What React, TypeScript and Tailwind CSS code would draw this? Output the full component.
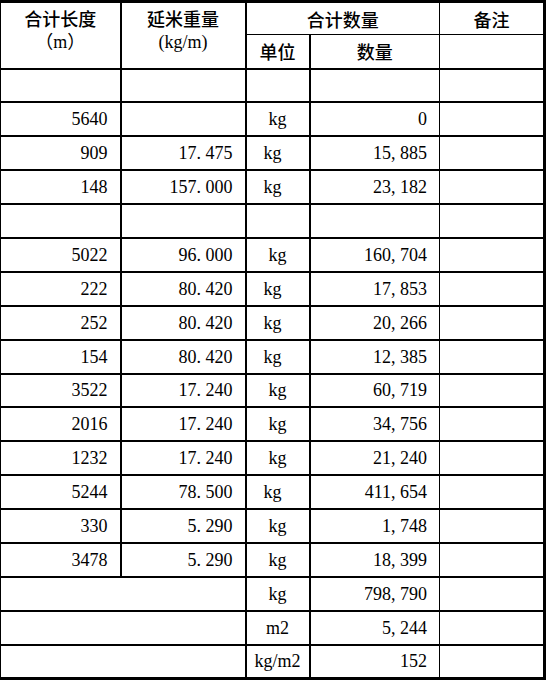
import React from "react";

type Row = { len?: string; wt?: string; unit?: string; qty?: string; left?: boolean; merged?: boolean };

const rows: Row[] = [
  {},
  { len: "5640", unit: "kg", qty: "0" },
  { len: "909", wt: "17.475", unit: "kg", qty: "15,885", left: true },
  { len: "148", wt: "157.000", unit: "kg", qty: "23,182", left: true },
  {},
  { len: "5022", wt: "96.000", unit: "kg", qty: "160,704" },
  { len: "222", wt: "80.420", unit: "kg", qty: "17,853", left: true },
  { len: "252", wt: "80.420", unit: "kg", qty: "20,266", left: true },
  { len: "154", wt: "80.420", unit: "kg", qty: "12,385", left: true },
  { len: "3522", wt: "17.240", unit: "kg", qty: "60,719" },
  { len: "2016", wt: "17.240", unit: "kg", qty: "34,756" },
  { len: "1232", wt: "17.240", unit: "kg", qty: "21,240" },
  { len: "5244", wt: "78.500", unit: "kg", qty: "411,654", left: true },
  { len: "330", wt: "5.290", unit: "kg", qty: "1,748" },
  { len: "3478", wt: "5.290", unit: "kg", qty: "18,399" },
  { merged: true, unit: "kg", qty: "798,790" },
  { merged: true, unit: "m2", qty: "5,244" },
  { merged: true, unit: "kg/m2", qty: "152" },
];

// SimSun-style half-width punctuation: give the dot and comma a full digit cell
function Num({ v }: { v?: string }) {
  if (!v) return null;
  const parts = v.split(/([.,])/);
  return (
    <>
      {parts.map((p, i) =>
        p === "." || p === "," ? (
          <span key={i} className="inline-block w-[9px] text-left">
            {p}
          </span>
        ) : (
          <React.Fragment key={i}>{p}</React.Fragment>
        )
      )}
    </>
  );
}

const serif = "font-['Liberation_Serif','Noto_Sans_CJK_SC',serif]";
const cjk = "font-['Noto_Sans_CJK_SC',sans-serif]";

export default function App() {
  return (
    <div className="w-[546px] h-[682px] bg-white overflow-hidden">
      <table
        className={`w-[546px] table-fixed border-collapse text-black text-[18px] ${serif} border-t-[3px] border-b-[3px] border-r-[3px] border-l border-black`}
      >
        <colgroup>
          <col className="w-[120px]" />
          <col className="w-[125px]" />
          <col className="w-[64px]" />
          <col className="w-[130px]" />
          <col />
        </colgroup>
        <thead>
          <tr className="h-[33px]">
            <th
              rowSpan={2}
              className="border-r-2 border-b-2 border-black align-top pt-[3px] font-normal leading-[24px]"
            >
              <div className={`${cjk} font-medium`}>合计长度</div>
              <div className="font-normal">（m）</div>
            </th>
            <th
              rowSpan={2}
              className="border-r-2 border-b-2 border-black align-top pt-[3px] font-normal leading-[24px]"
            >
              <div className={`${cjk} font-medium`}>延米重量</div>
              <div>(kg/m)</div>
            </th>
            <th colSpan={2} className={`border-r border-b border-black ${cjk} font-medium leading-[24px]`}>
              合计数量
            </th>
            <th className={`border-b border-black ${cjk} font-medium leading-[24px]`}>备注</th>
          </tr>
          <tr className="h-[34px]">
            <th className={`border-r-2 border-b-2 border-black ${cjk} font-medium`}>单位</th>
            <th className={`border-r border-b-2 border-black ${cjk} font-medium`}>数量</th>
            <th className="border-b-2 border-black" />
          </tr>
        </thead>
        <tbody>
          {rows.map((r, i) => (
            <tr key={i} className="h-[33.9px] leading-none">
              {r.merged ? (
                <td colSpan={2} className="border-r-2 border-b-2 border-black" />
              ) : (
                <>
                  <td className="border-r-2 border-b-2 border-black text-right pr-[12px]">{r.len}</td>
                  <td className="border-r-2 border-b-2 border-black text-right pr-[12px]">
                    <Num v={r.wt} />
                  </td>
                </>
              )}
              <td
                className={`border-r-2 border-b-2 border-black ${r.left ? "text-left pl-[17px]" : "text-center"}`}
              >
                {r.unit}
              </td>
              <td className="border-r border-b-2 border-black text-right pr-[12px]">
                <Num v={r.qty} />
              </td>
              <td className="border-b-2 border-black" />
            </tr>
          ))}
        </tbody>
      </table>
    </div>
  );
}
